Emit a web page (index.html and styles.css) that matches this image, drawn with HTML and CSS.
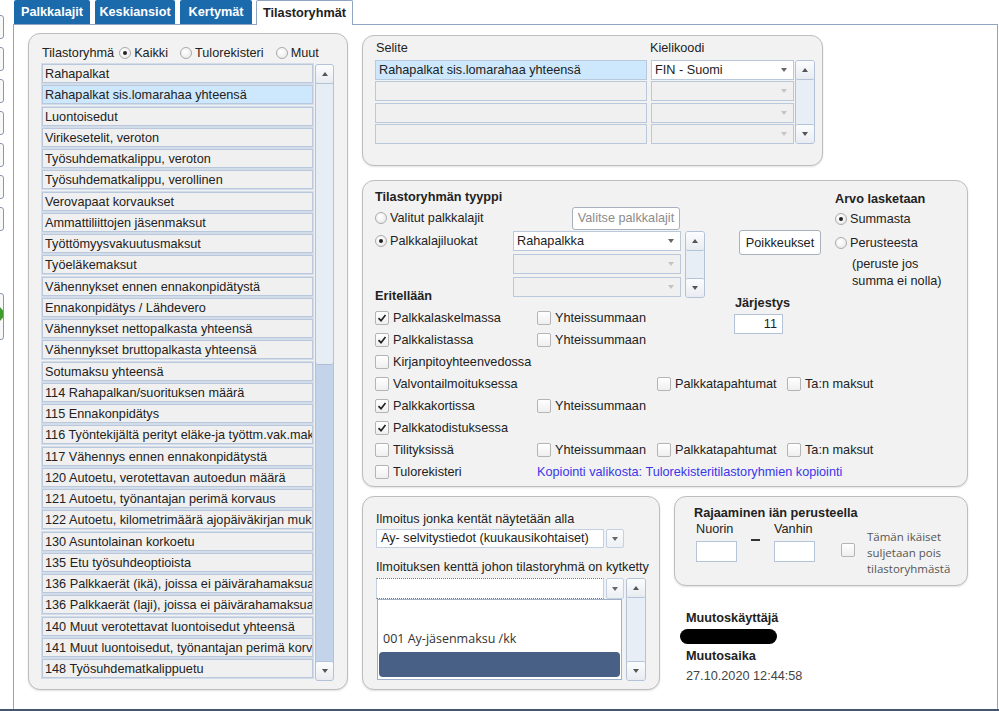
FILE: index.html
```html
<!DOCTYPE html>
<html lang="fi">
<head>
    <meta charset="UTF-8">
    <title>Tilastoryhmät</title>
    <link rel="stylesheet" href="styles.css">
</head>
<body>
<div class="app">
    <!-- left toolbar stubs -->
    <div class="side">
        <span class="stub"></span>
        <span class="stub"></span>
        <span class="stub"></span>
        <span class="stub"></span>
        <span class="stub"></span>
        <span class="stub"></span>
        <span class="stub"></span>
        <span class="stub go">
            <svg width="14" height="16" viewBox="0 0 14 16"><path d="M1 5 H7 V1 L13 8 L7 15 V11 H1 Z" fill="#3f9b2c"/></svg>
        </span>
    </div>

    <div class="main">
        <div class="tabs">
            <div class="tab">Palkkalajit</div>
            <div class="tab">Keskiansiot</div>
            <div class="tab">Kertymät</div>
            <div class="tab active">Tilastoryhmät</div>
        </div>

        <div class="page">
            <!-- Tilastoryhmä list -->
            <section class="group groups">
                <div class="head">
                    <span>Tilastoryhmä</span>
                    <label class="opt first"><span class="radio on"></span>Kaikki</label>
                    <label class="opt"><span class="radio"></span>Tulorekisteri</label>
                    <label class="opt"><span class="radio"></span>Muut</label>
                </div>
                <div class="list">
                    <div class="rows">
                        <div class="row">Rahapalkat</div>
                        <div class="row sel">Rahapalkat sis.lomarahaa yhteensä</div>
                        <div class="row">Luontoisedut</div>
                        <div class="row">Virikesetelit, veroton</div>
                        <div class="row">Työsuhdematkalippu, veroton</div>
                        <div class="row">Työsuhdematkalippu, verollinen</div>
                        <div class="row">Verovapaat korvaukset</div>
                        <div class="row">Ammattiliittojen jäsenmaksut</div>
                        <div class="row">Työttömyysvakuutusmaksut</div>
                        <div class="row">Työeläkemaksut</div>
                        <div class="row">Vähennykset ennen ennakonpidätystä</div>
                        <div class="row">Ennakonpidätys / Lähdevero</div>
                        <div class="row">Vähennykset nettopalkasta yhteensä</div>
                        <div class="row">Vähennykset bruttopalkasta yhteensä</div>
                        <div class="row">Sotumaksu yhteensä</div>
                        <div class="row">114 Rahapalkan/suorituksen määrä</div>
                        <div class="row">115 Ennakonpidätys</div>
                        <div class="row">116 Työntekijältä perityt eläke-ja työttm.vak.maksut</div>
                        <div class="row">117 Vähennys ennen ennakonpidätystä</div>
                        <div class="row">120 Autoetu, verotettavan autoedun määrä</div>
                        <div class="row">121 Autoetu, työnantajan perimä korvaus</div>
                        <div class="row">122 Autoetu, kilometrimäärä ajopäiväkirjan mukaan</div>
                        <div class="row">130 Asuntolainan korkoetu</div>
                        <div class="row">135 Etu työsuhdeoptioista</div>
                        <div class="row">136 Palkkaerät (ikä), joissa ei päivärahamaksua</div>
                        <div class="row">136 Palkkaerät (laji), joissa ei päivärahamaksua</div>
                        <div class="row">140 Muut verotettavat luontoisedut yhteensä</div>
                        <div class="row">141 Muut luontoisedut, työnantajan perimä korvaus</div>
                        <div class="row">148 Työsuhdematkalippuetu</div>
                    </div>
                    <div class="vscroll big">
                        <span class="sb up"></span>
                        <span class="thumb"></span>
                        <span class="track"></span>
                        <span class="sb down"></span>
                    </div>
                </div>
            </section>

            <div class="rightcol">
                <!-- Selite / Kielikoodi -->
                <section class="group texts">
                    <div class="labels">
                        <span class="lbl-selite">Selite</span>
                        <span>Kielikoodi</span>
                    </div>
                    <div class="grid4">
                        <div class="col fields">
                            <div class="field sel">Rahapalkat sis.lomarahaa yhteensä</div>
                            <div class="field"></div>
                            <div class="field"></div>
                            <div class="field"></div>
                        </div>
                        <div class="col langs">
                            <div class="dd white">FIN - Suomi</div>
                            <div class="dd off"></div>
                            <div class="dd off"></div>
                            <div class="dd off"></div>
                        </div>
                        <div class="vscroll">
                            <span class="sb up"></span>
                            <span class="track"></span>
                            <span class="sb down"></span>
                        </div>
                    </div>
                </section>

                <!-- Tilastoryhmän tyyppi -->
                <section class="group type">
                    <div class="type-top">
                        <div class="tleft">
                            <div class="bold">Tilastoryhmän tyyppi</div>
                            <div class="trow">
                                <label class="opt"><span class="radio"></span>Valitut palkkalajit</label>
                                <span class="btn dis">Valitse palkkalajit</span>
                            </div>
                            <div class="trow tall">
                                <div class="tlabels">
                                    <label class="opt"><span class="radio on"></span>Palkkalajiluokat</label>
                                    <span class="bold">Eritellään</span>
                                </div>
                                <div class="classes">
                                    <div class="col ddcol">
                                        <div class="dd white">Rahapalkka</div>
                                        <div class="dd off"></div>
                                        <div class="dd off"></div>
                                    </div>
                                    <div class="vscroll">
                                        <span class="sb up"></span>
                                        <span class="track"></span>
                                        <span class="sb down"></span>
                                    </div>
                                </div>
                            </div>
                        </div>
                        <div class="poik">
                            <span class="btn">Poikkeukset</span>
                        </div>
                        <div class="arvo">
                            <div class="bold">Arvo lasketaan</div>
                            <label class="opt a1"><span class="radio on"></span>Summasta</label>
                            <label class="opt a2"><span class="radio"></span>Perusteesta</label>
                            <div class="note">(peruste jos<br>summa ei nolla)</div>
                        </div>
                    </div>

                    <div class="checks">
                        <label class="chk"><span class="box on"></span>Palkkalaskelmassa</label>
                        <label class="chk"><span class="box"></span>Yhteissummaan</label>
                        <div class="order">
                            <div class="bold">Järjestys</div>
                            <div class="num">11</div>
                        </div>
                        <span></span>

                        <label class="chk"><span class="box on"></span>Palkkalistassa</label>
                        <label class="chk"><span class="box"></span>Yhteissummaan</label>
                        <span></span><span></span>

                        <label class="chk"><span class="box"></span>Kirjanpitoyhteenvedossa</label>
                        <span></span><span></span><span></span>

                        <label class="chk"><span class="box"></span>Valvontailmoituksessa</label>
                        <span></span>
                        <label class="chk"><span class="box"></span>Palkkatapahtumat</label>
                        <label class="chk"><span class="box"></span>Ta:n maksut</label>

                        <label class="chk"><span class="box on"></span>Palkkakortissa</label>
                        <label class="chk"><span class="box"></span>Yhteissummaan</label>
                        <span></span><span></span>

                        <label class="chk"><span class="box on"></span>Palkkatodistuksessa</label>
                        <span></span><span></span><span></span>

                        <label class="chk"><span class="box"></span>Tilityksissä</label>
                        <label class="chk"><span class="box"></span>Yhteissummaan</label>
                        <label class="chk"><span class="box"></span>Palkkatapahtumat</label>
                        <label class="chk"><span class="box"></span>Ta:n maksut</label>

                        <label class="chk"><span class="box"></span>Tulorekisteri</label>
                        <a class="link">Kopiointi valikosta: Tulorekisteritilastoryhmien kopiointi</a>
                    </div>
                </section>

                <div class="bottom">
                    <!-- Ilmoitus -->
                    <section class="group report">
                        <div>Ilmoitus jonka kentät näytetään alla</div>
                        <div class="combo first">
                            <div class="cval">Ay- selvitystiedot (kuukausikohtaiset)</div>
                            <span class="carrow"></span>
                        </div>
                        <div class="lbl2">Ilmoituksen kenttä johon tilastoryhmä on kytketty</div>
                        <div class="linked">
                            <div class="col">
                                <div class="combo">
                                    <div class="cval focus"></div>
                                    <span class="carrow"></span>
                                </div>
                                <div class="drop">
                                    <div class="ditem">001 Ay-jäsenmaksu /kk</div>
                                    <div class="dsel"></div>
                                </div>
                            </div>
                            <div class="vscroll">
                                <span class="sb up"></span>
                                <span class="track"></span>
                                <span class="sb down"></span>
                            </div>
                        </div>
                    </section>

                    <div class="agecol">
                        <section class="group age">
                            <div class="bold">Rajaaminen iän perusteella</div>
                            <div class="agerow">
                                <div class="agefield">
                                    <span>Nuorin</span>
                                    <span class="inp"></span>
                                </div>
                                <span class="dash"></span>
                                <div class="agefield">
                                    <span>Vanhin</span>
                                    <span class="inp"></span>
                                </div>
                                <span class="box agebox"></span>
                                <div class="agetext">Tämän ikäiset<br>suljetaan pois<br>tilastoryhmästä</div>
                            </div>
                        </section>
                        <div class="changed">
                            <div class="bold">Muutoskäyttäjä</div>
                            <div class="redact"></div>
                            <div class="bold mt">Muutosaika</div>
                            <div class="date">27.10.2020 12:44:58</div>
                        </div>
                    </div>
                </div>
            </div>
        </div>
    </div>
</div>
</body>
</html>
```

FILE: styles.css
```css
* {
    box-sizing: border-box;
}

body {
    margin: 0;
    background: #fff;
    font-family: "Liberation Sans", Arial, sans-serif;
    font-size: 12.7px;
    color: #222;
}

.app {
    display: flex;
    width: 999px;
    height: 711px;
    border-bottom: 2px solid #465672;
    overflow: hidden;
}

.bold {
    font-weight: bold;
}

/* left stubs */
.side {
    width: 13px;
    flex-shrink: 0;
    padding-top: 15px;
    display: flex;
    flex-direction: column;
    gap: 8px;
}

.stub {
    display: block;
    width: 24px;
    height: 24px;
    margin-left: -20px;
    border: 1px solid #8797b0;
    border-radius: 3px;
    background: #f8f8f8;
    overflow: hidden;
}

.stub.go {
    height: 47px;
    margin-top: 54px;
}

.stub.go svg {
    display: block;
    margin: 12px 0 0 12px;
}

/* tabs */
.main {
    width: 985px;
    display: flex;
    flex-direction: column;
}

.tabs {
    display: flex;
    gap: 5px;
    height: 24px;
    padding-left: 1px;
}

.tab {
    height: 24px;
    background: #1b6aab;
    color: #fff;
    font-weight: bold;
    display: flex;
    align-items: center;
    justify-content: center;
    border-radius: 2px 2px 0 0;
}

.tab:nth-child(1) { width: 76px; }
.tab:nth-child(2) { width: 80px; }
.tab:nth-child(3) { width: 72px; }

.tab.active {
    width: 97px;
    margin-left: -1px;
    height: 25px;
    margin-bottom: -1px;
    background: #fff;
    color: #222;
    border: 1px solid #8fa5c2;
    border-bottom: none;
    position: relative;
    z-index: 1;
}

.page {
    flex: 1;
    border: 1px solid #8fa5c2;
    border-bottom: none;
    display: flex;
    gap: 14px;
    padding: 8px 0 0 14px;
}

/* group boxes */
.group {
    background: #f2f2f2;
    border: 1px solid #bdbdbd;
    border-radius: 12px;
    box-shadow: 0 1px 2px rgba(0, 0, 0, 0.12);
}

.opt {
    display: inline-flex;
    align-items: center;
    gap: 3px;
    white-space: nowrap;
}

.radio {
    width: 12px;
    height: 12px;
    border-radius: 50%;
    border: 1px solid #aaa;
    background: radial-gradient(circle at 40% 35%, #fff, #e6e6e6);
    display: inline-flex;
    align-items: center;
    justify-content: center;
}

.radio.on::after {
    content: "";
    width: 4px;
    height: 4px;
    border-radius: 50%;
    background: #222;
}

.box {
    width: 14px;
    height: 14px;
    border: 1px solid #b4b4b4;
    border-radius: 2px;
    background: linear-gradient(#fff, #efefef);
    flex-shrink: 0;
    display: inline-block;
}

.box.on {
    background: url("data:image/svg+xml,%3Csvg xmlns='http://www.w3.org/2000/svg' width='12' height='12'%3E%3Cpath d='M2.5 6.2 L5 8.7 L9.5 3' stroke='%23222' stroke-width='1.7' fill='none'/%3E%3C/svg%3E") center no-repeat, linear-gradient(#fff, #efefef);
}

/* scrollbars */
.vscroll {
    display: flex;
    flex-direction: column;
    width: 20px;
    background: #e8eef5;
    border: 1px solid #b3c2d6;
    border-radius: 3px;
}

.sb {
    height: 19px;
    flex-shrink: 0;
    background: linear-gradient(#fbfcfd, #e8ecf1);
    border-radius: 2px;
    display: flex;
    align-items: center;
    justify-content: center;
}

.sb.up {
    border-bottom: 1px solid #b3c2d6;
}

.sb.down {
    border-top: 1px solid #b3c2d6;
}

.sb::after {
    content: "";
    border-left: 3.5px solid transparent;
    border-right: 3.5px solid transparent;
    border-bottom: 4px solid #555;
}

.sb.down::after {
    border-bottom: 0;
    border-top: 4px solid #555;
}

.track {
    flex: 1;
}

/* Tilastoryhmä list */
.groups {
    width: 320px;
    height: 657px;
    padding: 11px 12px 0 13px;
}

.groups .head {
    display: flex;
    align-items: center;
    height: 16px;
    margin-bottom: 3px;
}

.groups .opt {
    margin-left: 12px;
}

.groups .opt.first {
    margin-left: 5px;
}

.list {
    display: flex;
    gap: 2px;
}

.rows {
    width: 271px;
}

.row {
    height: 19px;
    margin-bottom: 2.25px;
    padding: 2px 0 0 2px;
    background: #f0f0f0;
    border: 1px solid #b9c8dc;
    box-shadow: 0 0 0 1px #d3dde9;
    white-space: nowrap;
    overflow: hidden;
}

.row.sel,
.field.sel {
    background: #cde8fd;
}

.vscroll.big {
    width: 19px;
    height: 617px;
    background: #c3d3e9;
}

.big .thumb {
    height: 281px;
    background: #e7edf5;
    border-bottom: 1px solid #aebdd2;
    border-radius: 0 0 3px 3px;
}

/* right column */
.rightcol {
    display: flex;
    flex-direction: column;
    width: 606px;
}

.texts {
    width: 461px;
    height: 131px;
    margin-top: 2px;
    padding: 5px 0 0 12px;
}

.labels {
    display: flex;
    height: 16px;
    margin-bottom: 3px;
}

.lbl-selite {
    width: 275px;
    padding-left: 1px;
}

.grid4 {
    display: flex;
    align-items: flex-start;
}

.col {
    display: flex;
    flex-direction: column;
}

.fields {
    width: 272px;
    gap: 1.3px;
}

.field,
.dd {
    height: 20px;
    padding: 2px 0 0 3px;
    background: #f0f0f0;
    border: 1px solid #bac8db;
    white-space: nowrap;
}

.langs {
    width: 143px;
    margin-left: 4px;
    gap: 1.3px;
}

.texts .vscroll {
    height: 84px;
    margin-left: 1px;
}

.dd {
    position: relative;
}

.dd::after {
    content: "";
    position: absolute;
    right: 6px;
    top: 7px;
    border-left: 3.5px solid transparent;
    border-right: 3.5px solid transparent;
    border-top: 4px solid #666;
}

.dd.white {
    background: #fff;
}

.dd.off::after {
    border-top-color: #c4c4c4;
}

/* tyyppi */
.type {
    width: 606px;
    height: 307px;
    margin-top: 14px;
    padding: 8px 0 0 12px;
}

.type-top {
    display: flex;
    height: 118px;
}

.tleft {
    width: 331px;
}

.tleft > .bold {
    height: 16px;
    line-height: 16px;
}

.trow {
    display: flex;
    margin-top: 2px;
    height: 22px;
    align-items: center;
}

.trow .btn {
    margin-left: 59px;
}

.trow.tall {
    height: 76px;
    align-items: stretch;
}

.tlabels {
    width: 138px;
    display: flex;
    flex-direction: column;
    justify-content: space-between;
    padding: 3px 0 4px;
}

.trow .opt {
    width: 138px;
}

.classes {
    display: flex;
    height: 67px;
}

.ddcol {
    width: 168px;
    gap: 3px;
}

.classes .vscroll {
    margin-left: 4px;
    height: 67px;
}

.btn {
    display: inline-flex;
    align-items: center;
    justify-content: center;
    height: 23px;
    padding: 0 6px;
    background: #fff;
    border: 1px solid #a8b1bd;
    border-radius: 3px;
    white-space: nowrap;
}

.btn.dis {
    color: #8c8c8c;
    width: 108px;
    padding: 0;
}

.poik {
    width: 96px;
    margin-left: 33px;
    padding-top: 41px;
}

.poik .btn {
    width: 82px;
    height: 25px;
}

.arvo {
    padding-top: 3px;
}

.arvo .a1 {
    margin-top: 6px;
}

.arvo .a2 {
    margin-top: 10px;
}

.arvo .opt {
    display: flex;
}

.note {
    margin: 6px 0 0 17px;
    line-height: 17px;
}

.checks {
    display: grid;
    grid-template-columns: 162px 120px 130px 1fr;
    grid-auto-rows: 22px;
}

.chk {
    display: flex;
    align-items: center;
    gap: 4px;
    white-space: nowrap;
}

.order {
    margin: -12px 0 0 77px;
}

.order .bold {
    height: 16px;
    line-height: 16px;
    margin-left: 1px;
}

.num {
    width: 49px;
    height: 20px;
    margin-top: 3px;
    padding: 2px 5px 0 0;
    text-align: right;
    background: #fff;
    border: 1px solid #b3c2d6;
}

.link {
    grid-column: span 3;
    color: #3a36ea;
    display: flex;
    align-items: center;
}

/* bottom row */
.bottom {
    display: flex;
    gap: 14px;
    margin-top: 9px;
}

.report {
    width: 298px;
    height: 194px;
    padding: 15px 0 0 13px;
}

.combo {
    display: flex;
    gap: 2px;
    width: 248px;
}

.combo.first {
    margin-top: 3px;
    height: 19px;
}

.cval {
    flex: 1;
    height: 100%;
    padding: 1px 0 0 4px;
    background: #fff;
    border: 1px solid #c3d0e1;
    white-space: nowrap;
}

.carrow {
    width: 18px;
    background: linear-gradient(#fbfcfd, #edf0f4);
    border: 1px solid #c3d0e1;
    border-radius: 2px;
    display: flex;
    align-items: center;
    justify-content: center;
}

.carrow::after {
    content: "";
    border-left: 3.5px solid transparent;
    border-right: 3.5px solid transparent;
    border-top: 4px solid #666;
}

.lbl2 {
    margin-top: 11px;
    height: 16px;
    line-height: 16px;
}

.linked {
    display: flex;
    margin-top: 3px;
}

.linked .combo {
    height: 21px;
}

.cval.focus {
    border-top: 1px dotted #777;
    border-bottom: 1px dotted #777;
    box-shadow: inset 0 0 0 2px #fff, inset 0 3px 0 #fff;
}

.drop {
    width: 245px;
    height: 81px;
    margin-left: 1px;
    background: #fff;
    border: 1px solid #9fb0c8;
    padding: 0 1px;
}

.ditem {
    margin-top: 30px;
    height: 18px;
    padding-left: 4px;
    font-family: "Open Sans", "DejaVu Sans", sans-serif;
    font-size: 12.5px;
    color: #333;
}

.dsel {
    height: 25px;
    margin-top: 4px;
    background: #485f86;
    border-radius: 4px;
}

.linked .vscroll {
    height: 103px;
    margin-left: 2px;
}

/* ikärajaus */
.agecol {
    width: 294px;
}

.age {
    height: 90px;
    padding: 8px 0 0 19px;
}

.age > .bold {
    height: 16px;
    line-height: 16px;
}

.agerow {
    display: flex;
    align-items: flex-start;
}

.agefield {
    display: flex;
    flex-direction: column;
    margin-left: 2px;
}

.agefield span:first-child {
    height: 16px;
    line-height: 16px;
}

.inp {
    width: 41px;
    height: 21px;
    margin-top: 4px;
    background: #fff;
    border: 1px solid #b6c4d8;
}

.dash {
    width: 9px;
    height: 2px;
    margin: 18px 12px 0 14px;
    background: #333;
}

.agebox {
    margin: 22px 0 0 26px;
}

.agetext {
    margin: 8px 0 0 12px;
    font-family: "Open Sans", "DejaVu Sans", sans-serif;
    font-size: 11.5px;
    line-height: 16px;
    color: #555;
}

.changed {
    margin-top: 24px;
    padding-left: 12px;
}

.changed .bold {
    height: 16px;
    line-height: 16px;
}

.redact {
    width: 97px;
    height: 15px;
    margin: 3px 0 0 -6px;
    background: #000;
    border-radius: 8px;
}

.changed .mt {
    margin-top: 4px;
}

.date {
    margin-top: 5px;
    color: #444;
}
```
